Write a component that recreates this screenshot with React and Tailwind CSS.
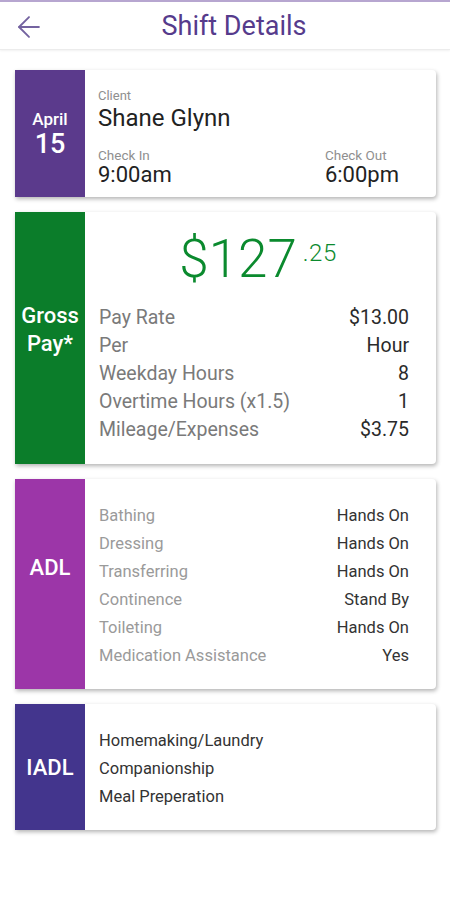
import { ArrowLeft } from 'lucide-react'

function Band({ color, children, className = '' }) {
  return (
    <div className={`w-[70px] shrink-0 flex items-center justify-center text-white font-medium text-center ${color} ${className}`}>
      {children}
    </div>
  )
}

function Row({ label, value, labelClass, valueClass }) {
  return (
    <div className="flex justify-between">
      <span className={labelClass}>{label}</span>
      <span className={valueClass}>{value}</span>
    </div>
  )
}

const pay = [
  ['Pay Rate', '$13.00'],
  ['Per', 'Hour'],
  ['Weekday Hours', '8'],
  ['Overtime Hours (x1.5)', '1'],
  ['Mileage/Expenses', '$3.75'],
]

const adl = [
  ['Bathing', 'Hands On'],
  ['Dressing', 'Hands On'],
  ['Transferring', 'Hands On'],
  ['Continence', 'Stand By'],
  ['Toileting', 'Hands On'],
  ['Medication Assistance', 'Yes'],
]

const iadl = ['Homemaking/Laundry', 'Companionship', 'Meal Preperation']

export default function App() {
  return (
    <div className="min-h-[900px] bg-white font-['Roboto',sans-serif]">
      <header className="h-[50px] border-t-2 border-[#b7a6d0] border-b border-b-[#ececec] shadow-[0_1px_2px_rgba(0,0,0,0.06)] relative flex items-center justify-center pl-[18px] pt-[2px]">
        <ArrowLeft className="absolute left-[12px] top-[8px] text-[#7463a0]" size={34} strokeWidth={1.3} />
        <h1 className="text-[27px] text-[#563b8c] leading-none">Shift Details</h1>
      </header>

      <main className="flex flex-col gap-[15px] pl-[15px] pr-[14px] pt-[20px]">
        <section className="flex h-[127px] bg-white rounded-r-[4px] shadow-[1px_2px_4px_rgba(0,0,0,0.3)]">
          <Band color="bg-[#5b3a8c]" className="flex-col pb-[2px]">
            <span className="text-[17px] leading-[22px]">April</span>
            <span className="text-[27px] leading-[28px]">15</span>
          </Band>
          <div className="flex-1 pl-[13px] pr-[37px] pt-[18px]">
            <div className="text-[13px] leading-[16px] text-[#8f8f8f]">Client</div>
            <div className="text-[24px] leading-[28px] text-[#222]">Shane Glynn</div>
            <div className="flex justify-between mt-[15px]">
              <div>
                <div className="text-[13.5px] leading-[16px] text-[#8f8f8f]">Check In</div>
                <div className="text-[22px] leading-[24px] text-[#222]">9:00am</div>
              </div>
              <div>
                <div className="text-[13.5px] leading-[16px] text-[#8f8f8f]">Check Out</div>
                <div className="text-[22px] leading-[24px] text-[#222]">6:00pm</div>
              </div>
            </div>
          </div>
        </section>

        <section className="flex h-[252px] bg-white rounded-r-[4px] shadow-[1px_2px_4px_rgba(0,0,0,0.3)]">
          <Band color="bg-[#0b7d2a]" className="flex-col pb-[16px] text-[22px] leading-[28px]">
            <span>Gross</span>
            <span>Pay*</span>
          </Band>
          <div className="flex-1 pl-[14px] pr-[27px] pt-[17px]">
            <div className="flex justify-center items-start h-[60px] text-[#0b8a2e] font-light pl-[8px]">
              <span className="text-[53px] leading-[60px]">$127</span>
              <span className="text-[24px] leading-[24px] mt-[12px] ml-[6px] tracking-[0.5px]">.25</span>
            </div>
            <div className="mt-[15px] text-[19.5px] leading-[28px]">
              {pay.map(([l, v]) => (
                <Row key={l} label={l} value={v} labelClass="text-[#7a7a7a]" valueClass="text-[#2a2a2a]" />
              ))}
            </div>
          </div>
        </section>

        <section className="flex h-[210px] bg-white rounded-r-[4px] shadow-[1px_2px_4px_rgba(0,0,0,0.3)]">
          <Band color="bg-[#9c36a8]" className="pb-[34px] text-[22px]">ADL</Band>
          <div className="flex-1 pl-[14px] pr-[27px] pt-[23px] text-[16.5px] leading-[28px]">
            {adl.map(([l, v]) => (
              <Row key={l} label={l} value={v} labelClass="text-[#9a9a9a]" valueClass="text-[#333]" />
            ))}
          </div>
        </section>

        <section className="flex h-[126px] bg-white rounded-r-[4px] shadow-[1px_2px_4px_rgba(0,0,0,0.3)]">
          <Band color="bg-[#43358d]" className="text-[22px]">IADL</Band>
          <div className="flex-1 pl-[14px] pt-[23px] text-[16.5px] leading-[28px] text-[#333]">
            {iadl.map((t) => (
              <div key={t}>{t}</div>
            ))}
          </div>
        </section>
      </main>
    </div>
  )
}
